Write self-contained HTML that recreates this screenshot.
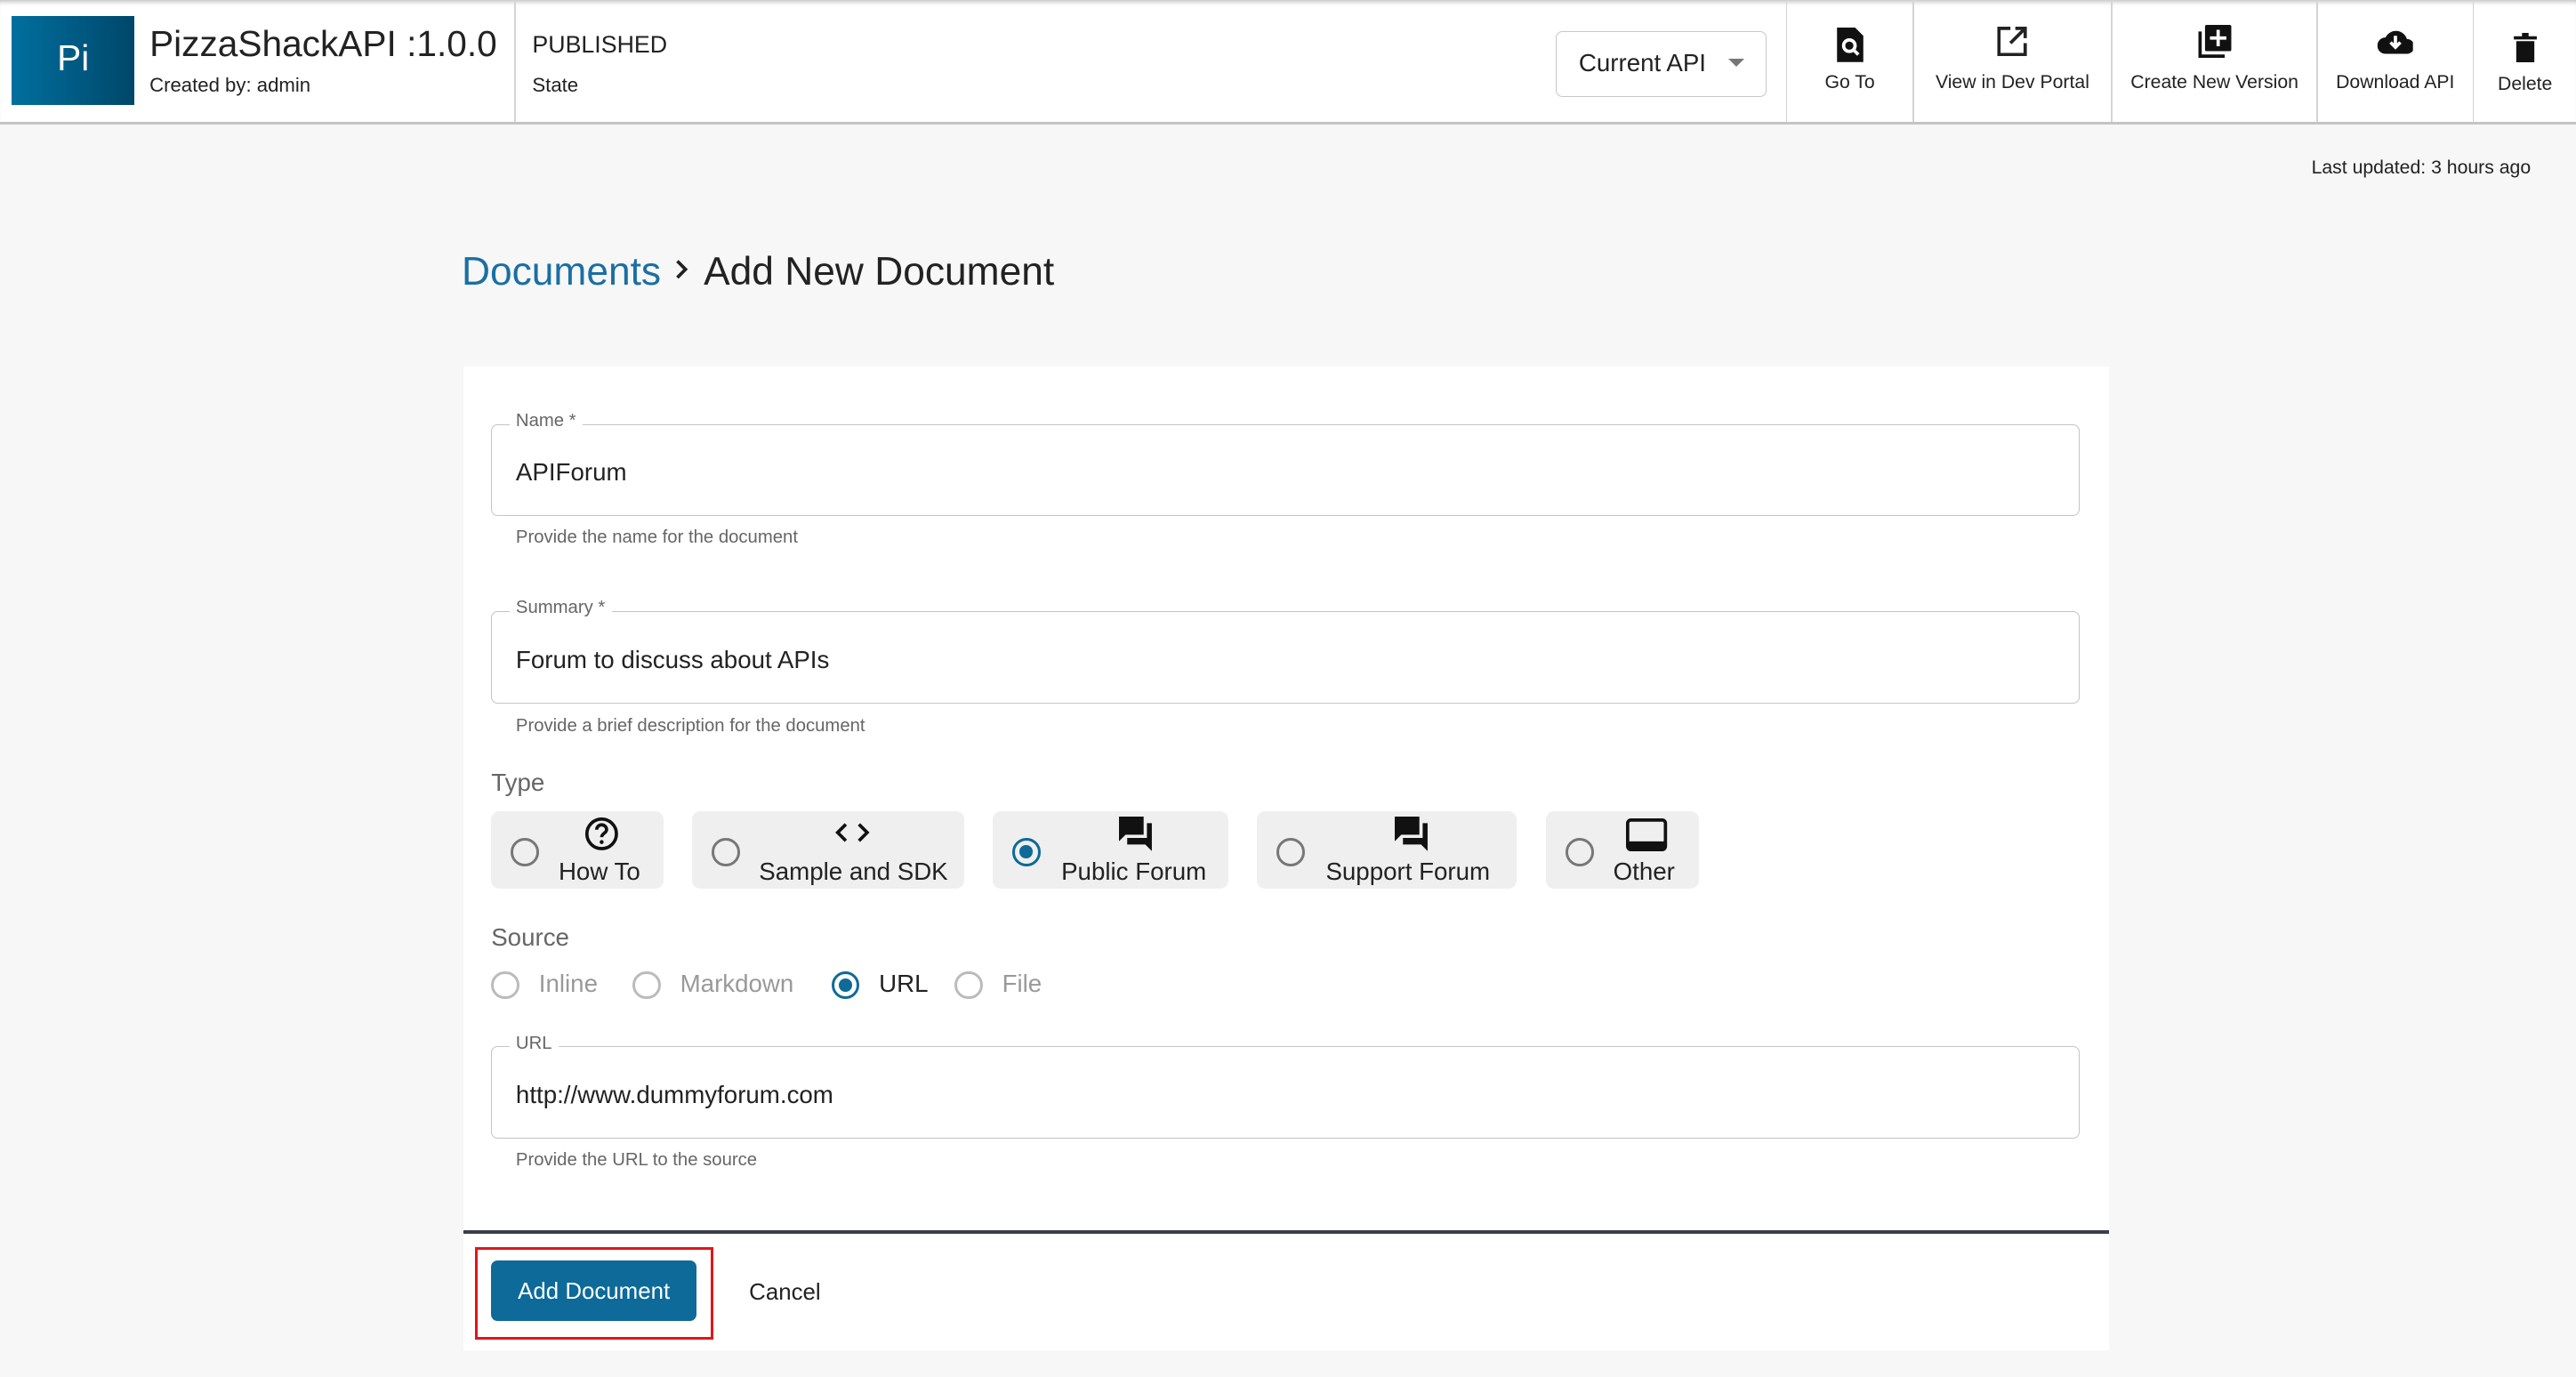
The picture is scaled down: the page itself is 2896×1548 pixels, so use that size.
<!DOCTYPE html>
<html><head><meta charset="utf-8"><style>
html{zoom:1.8469}
body{margin:0;width:1568px;height:838px;background:#f7f7f7;font-family:"Liberation Sans",sans-serif;color:#222;position:relative;overflow:hidden}
.a{position:absolute}
.hdr{left:0;top:0;width:1568px;height:74px;background:#fff;border-bottom:2px solid #c4c4c4;box-shadow:inset 0 3px 3px -2px #bbb}
.vd{top:0;height:74px;width:1px;background:#d4d4d4}
.act{top:0;height:74px;text-align:center;font-size:11.5px}
.act svg{position:absolute;left:50%;transform:translateX(-50%)}
.act span{position:absolute;left:0;right:0;top:44px}
.fld{left:299px;width:966px;height:55px;border:1px solid #c4c4c4;border-radius:4px;background:#fff}
.lbl{font-size:11px;color:#666;background:#fff;padding:0 4px}
.val{font-size:15px;color:#222}
.help{font-size:11px;color:#666}
.chip{top:494px;height:47px;background:#efefef;border-radius:5px}
.rad{width:14px;height:14px;border:2px solid #777;border-radius:50%;box-sizing:content-box}
.radc{width:14px;height:14px;border:2px solid #0d6a99;border-radius:50%}
.radc:after{content:"";position:absolute;left:3px;top:3px;width:8px;height:8px;border-radius:50%;background:#0d6a99}
.cl{font-size:15px;color:#222}
.src{font-size:15px;color:#999}
</style></head><body>
<div class="a hdr"></div>
<div class="a" style="left:7px;top:10px;width:75px;height:54px;background:linear-gradient(90deg,#006f9e,#00476a)"></div>
<div class="a" style="left:7px;top:23px;width:75px;text-align:center;color:#fff;font-size:22px">Pi</div>
<div class="a" style="left:91px;top:14px;font-size:22px">PizzaShackAPI :1.0.0</div>
<div class="a" style="left:91px;top:45px;font-size:12px">Created by: admin</div>
<div class="a vd" style="left:313px"></div>
<div class="a" style="left:324px;top:19px;font-size:14.5px">PUBLISHED</div>
<div class="a" style="left:324px;top:45px;font-size:12px">State</div>
<div class="a" style="left:947px;top:19px;width:127px;height:39px;border:1px solid #c8c8c8;border-radius:4px"></div>
<div class="a" style="left:961px;top:30px;font-size:15px">Current API</div>
<div class="a" style="left:1052px;top:36px;width:0;height:0;border-left:5px solid transparent;border-right:5px solid transparent;border-top:5px solid #777"></div>
<div class="a vd" style="left:1087px"></div>
<div class="a vd" style="left:1164px"></div>
<div class="a vd" style="left:1285px"></div>
<div class="a vd" style="left:1410px"></div>
<div class="a vd" style="left:1505px"></div>
<div class="a act" style="left:1088px;width:76px"><svg style="top:17px" width="18" height="22" viewBox="0 0 18 22"><path d="M1 0h11l5 5v16H1z" fill="#111"/><circle cx="8.5" cy="11" r="3.5" fill="none" stroke="#fff" stroke-width="2"/><path d="M11 13.5l3 3" stroke="#fff" stroke-width="2"/></svg><span>Go To</span></div>
<div class="a act" style="left:1165px;width:120px"><svg style="top:16px" width="18" height="18" viewBox="0 0 18 18"><path d="M8 1H1v16h16v-7" fill="none" stroke="#222" stroke-width="2"/><path d="M11 1h6v6M17 1L8 10" fill="none" stroke="#222" stroke-width="2"/></svg><span>View in Dev Portal</span></div>
<div class="a act" style="left:1286px;width:124px"><svg style="top:15px" width="20" height="20" viewBox="0 0 20 20"><path d="M1 4v15h15" fill="none" stroke="#111" stroke-width="2"/><rect x="4" y="0" width="16" height="16" rx="1" fill="#111"/><path d="M12 3v10M7 8h10" stroke="#fff" stroke-width="2"/></svg><span>Create New Version</span></div>
<div class="a act" style="left:1411px;width:94px"><svg style="top:17px" width="22" height="16" viewBox="0 0 22 16"><path d="M5 16a5 5 0 010-10 7 7 0 0113 1 4.5 4.5 0 010 9z" fill="#111"/><path d="M11 5v7M8 9l3 3 3-3" fill="none" stroke="#fff" stroke-width="2"/></svg><span>Download API</span></div>
<div class="a act" style="left:1506px;width:62px"><svg style="top:20px" width="14" height="18" viewBox="0 0 14 18"><path d="M0 2h14v2H0zM5 0h4v2H5zM1.5 5h11v13h-11z" fill="#111"/></svg><span style="top:45px">Delete</span></div>

<div class="a" style="left:1407px;top:96px;font-size:11.5px">Last updated: 3 hours ago</div>
<div class="a" style="left:281px;top:152px;font-size:24px;white-space:nowrap"><span style="color:#1a6fa3">Documents</span><svg width="26" height="16" viewBox="0 0 26 16" style="margin:0 0 1px 0"><path d="M10 3l5 5-5 5" fill="none" stroke="#222" stroke-width="2"/></svg>Add New Document</div>

<div class="a" style="left:282px;top:223px;width:1002px;height:599px;background:#fff"></div>
<div class="a" style="left:282px;top:749px;width:1002px;height:2px;background:#3a3f4f"></div>

<div class="a fld" style="top:258px"></div>
<div class="a lbl" style="left:310px;top:250px">Name *</div>
<div class="a val" style="left:314px;top:279px">APIForum</div>
<div class="a help" style="left:314px;top:321px">Provide the name for the document</div>

<div class="a fld" style="top:372px"></div>
<div class="a lbl" style="left:310px;top:364px">Summary *</div>
<div class="a val" style="left:314px;top:393px">Forum to discuss about APIs</div>
<div class="a help" style="left:314px;top:436px">Provide a brief description for the document</div>

<div class="a" style="left:299px;top:468px;font-size:15px;color:#666">Type</div>
<div class="a chip" style="left:299px;width:105px"></div>
<div class="a chip" style="left:421px;width:166px"></div>
<div class="a chip" style="left:604px;width:144px"></div>
<div class="a chip" style="left:765px;width:158px"></div>
<div class="a chip" style="left:941px;width:93px"></div>
<div class="a rad" style="left:311px;top:510px"></div>
<div class="a rad" style="left:433px;top:510px"></div>
<div class="a radc" style="left:616px;top:510px"></div>
<div class="a rad" style="left:777px;top:510px"></div>
<div class="a rad" style="left:953px;top:510px"></div>
<svg class="a" style="left:356px;top:497px" width="21" height="21" viewBox="0 0 21 21"><circle cx="10.5" cy="10.5" r="9" fill="none" stroke="#111" stroke-width="2"/><path d="M7.5 8a3 3 0 116 0c0 2-3 2.3-3 4.5" fill="none" stroke="#111" stroke-width="2"/><circle cx="10.5" cy="15.5" r="1.2" fill="#111"/></svg>
<svg class="a" style="left:508px;top:500px" width="22" height="14" viewBox="0 0 22 14"><path d="M7 2L2 7l5 5M15 2l5 5-5 5" fill="none" stroke="#111" stroke-width="2"/></svg>
<svg class="a" style="left:681px;top:497px" width="22" height="22" viewBox="0 0 22 22"><path d="M0 0h15v11H4l-4 4z" fill="#111"/><path d="M17 4h3v17l-4-4H5v-4h12z" fill="#111"/></svg>
<svg class="a" style="left:849px;top:497px" width="22" height="22" viewBox="0 0 22 22"><path d="M0 0h15v11H4l-4 4z" fill="#111"/><path d="M17 4h3v17l-4-4H5v-4h12z" fill="#111"/></svg>
<svg class="a" style="left:990px;top:498px" width="25" height="20" viewBox="0 0 25 20"><rect x="1" y="1" width="23" height="18" rx="2" fill="none" stroke="#111" stroke-width="2"/><rect x="1" y="14" width="23" height="5" fill="#111"/></svg>
<div class="a cl" style="left:340px;top:522px">How To</div>
<div class="a cl" style="left:462px;top:522px">Sample and SDK</div>
<div class="a cl" style="left:646px;top:522px">Public Forum</div>
<div class="a cl" style="left:807px;top:522px">Support Forum</div>
<div class="a cl" style="left:982px;top:522px">Other</div>

<div class="a" style="left:299px;top:562px;font-size:15px;color:#666">Source</div>
<div class="a rad" style="left:299px;top:591px;border-color:#bbb"></div>
<div class="a src" style="left:328px;top:590px">Inline</div>
<div class="a rad" style="left:385px;top:591px;border-color:#bbb"></div>
<div class="a src" style="left:414px;top:590px">Markdown</div>
<div class="a radc" style="left:506px;top:591px"></div>
<div class="a src" style="left:535px;top:590px;color:#222">URL</div>
<div class="a rad" style="left:581px;top:591px;border-color:#bbb"></div>
<div class="a src" style="left:610px;top:590px">File</div>

<div class="a fld" style="top:637px"></div>
<div class="a lbl" style="left:310px;top:629px">URL</div>
<div class="a val" style="left:314px;top:658px">http://www.dummyforum.com</div>
<div class="a help" style="left:314px;top:700px">Provide the URL to the source</div>

<div class="a" style="left:289px;top:759px;width:142px;height:53px;border:2px solid #e0161b"></div>
<div class="a" style="left:299px;top:767px;width:125px;height:37px;background:#0d6a99;border-radius:4px;color:#fff;font-size:14px;text-align:center;line-height:38px">Add Document</div>
<div class="a" style="left:456px;top:779px;font-size:14px">Cancel</div>
</body></html>
